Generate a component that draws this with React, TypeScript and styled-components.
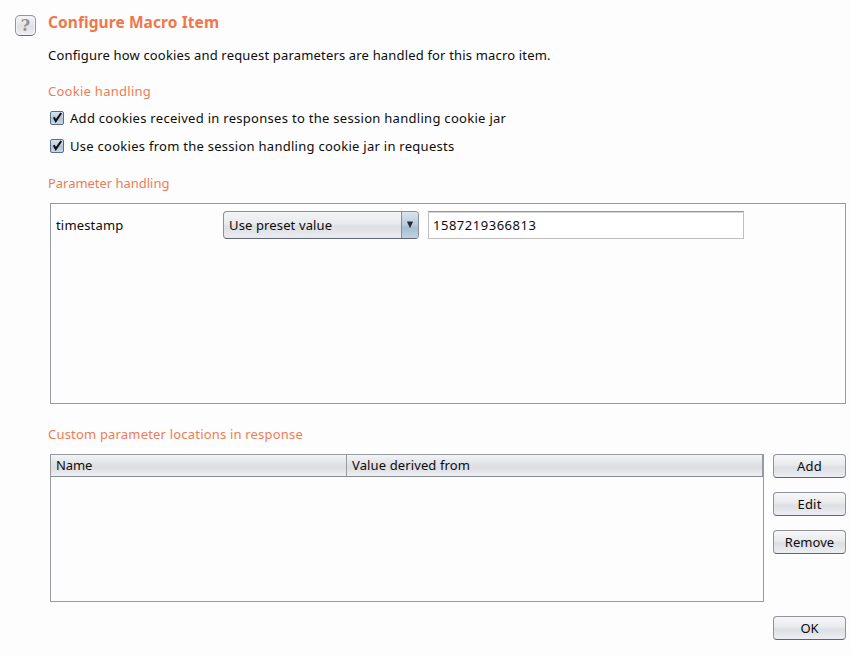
import React from "react";
import styled, { createGlobalStyle } from "styled-components";

const GlobalStyle = createGlobalStyle`
  * { box-sizing: border-box; }
  body {
    margin: 0;
    background: #fdfdfd;
    color: #0c0c0c;
    font-family: "Noto Sans", "Open Sans", sans-serif;
    font-size: 13px;
    line-height: 20px;
    overflow: hidden;
  }
  button, input { font: inherit; color: inherit; margin: 0; }
`;

const Dialog = styled.main`
  display: grid;
  grid-template-columns: 33px 1fr;
  width: 851px;
  height: 655px;
  padding: 12px 5px 0 15px;
`;

const Content = styled.div`
  display: flex;
  flex-direction: column;
`;

const Tracked = styled.span<{ $spacing: number }>`
  letter-spacing: ${(p) => p.$spacing}px;
  white-space: nowrap;
`;

const Title = styled.h1`
  margin: 0;
  height: 20px;
  font-size: 15.5px;
  line-height: 20px;
  font-weight: 700;
  color: #f0774a;
`;

const Description = styled.p`
  margin: 13px 0 0;
`;

const Heading = styled.h2<{ $top: number }>`
  margin: ${(p) => p.$top}px 0 0;
  font-size: 13px;
  line-height: 20px;
  font-weight: 400;
  color: #ee7c55;
`;

const CheckRow = styled.label<{ $top: number }>`
  display: flex;
  align-items: center;
  gap: 6px;
  height: 20px;
  margin: ${(p) => p.$top}px 0 0 2px;
`;

const CheckIcon = styled.svg`
  display: block;
  width: 14px;
  height: 16px;
  overflow: visible;
`;

const HelpButton = styled.button`
  display: flex;
  justify-content: center;
  width: 21px;
  height: 21px;
  margin-top: 3px;
  padding: 0;
  border: 1px solid #92959b;
  border-bottom-color: #666b73;
  border-radius: 5px;
  background: linear-gradient(#f5f6f8, #dfe1e5 55%, #eceef2);
  box-shadow: inset 0 0 0 1px #f3f4f6;
  color: #909296;
  font-family: "DejaVu Serif", serif;
  font-size: 16px;
  line-height: 19px;
  font-weight: 700;
`;

const ParameterPanel = styled.section`
  display: flex;
  align-items: flex-start;
  width: 796px;
  height: 201px;
  margin: 10px 0 0 2px;
  padding: 7px 0 0 5px;
  border: 1px solid #979a9f;
`;

const ParameterName = styled.div`
  width: 167px;
  padding-top: 4px;
`;

const Select = styled.button`
  display: flex;
  width: 196px;
  height: 28px;
  padding: 0;
  border: 1px solid #8b8f96;
  border-bottom-color: #5d6570;
  border-radius: 4px;
  background: linear-gradient(#f3f4f6, #e9eaed 45%, #dcdee2 55%, #eaecf1);
  text-align: left;
  overflow: hidden;
`;

const SelectValue = styled.span`
  flex: 1;
  padding: 3px 0 0 5px;
`;

const SelectArrow = styled.span`
  display: flex;
  align-items: center;
  justify-content: center;
  width: 17px;
  height: 26px;
  border-left: 1px solid #7d91a5;
  background: linear-gradient(#d9e4ee, #b9cbdb 50%, #a7bed1 60%, #bfd3e4);
`;

const ValueInput = styled.input`
  width: 316px;
  height: 28px;
  margin-left: 9px;
  padding: 0 4px;
  border: 1px solid #bfbfc0;
  border-top-color: #949494;
  border-radius: 0;
  background: #fff;
  box-shadow: inset 0 1px 0 #d5d5d5;
  outline: none;
  letter-spacing: 0.52px;
`;

const LocationArea = styled.section`
  display: flex;
  gap: 9px;
  margin: 10px 0 0 2px;
`;

const Table = styled.div`
  width: 714px;
  height: 148px;
  border: 1px solid #979a9f;
`;

const TableHead = styled.div`
  display: grid;
  grid-template-columns: 296px 1fr;
  height: 22px;
  border-bottom: 1px solid #868c94;
  background: linear-gradient(#f3f4f6, #e3e4e8 38%, #dcdde1 60%, #eef0f5);
`;

const HeadCell = styled.div`
  padding-left: 5px;
  border-right: 1px solid #969ba2;
`;

const Actions = styled.div`
  display: flex;
  flex-direction: column;
  gap: 14px;
  width: 73px;
`;

const ActionButton = styled.button`
  display: flex;
  justify-content: center;
  width: 73px;
  height: 24px;
  padding: 1px 0 0;
  border: 1px solid #90939a;
  border-bottom-color: #5f656e;
  border-radius: 4px;
  background: linear-gradient(#f7f7f9, #e9eaed 45%, #dcdee2 55%, #eceef3);
`;

const Footer = styled.footer`
  display: flex;
  justify-content: flex-end;
  margin-top: 14px;
`;

function CheckedBox() {
  return (
    <CheckIcon viewBox="0 0 14 16">
      <defs>
        <linearGradient id="box" x1="0" y1="0" x2="0" y2="1">
          <stop offset="0" stopColor="#dce7f1" />
          <stop offset="0.55" stopColor="#afc4d6" />
          <stop offset="1" stopColor="#c9dae8" />
        </linearGradient>
      </defs>
      <rect x="0.5" y="1.5" width="13" height="13" rx="1.5" fill="url(#box)" stroke="#596f86" />
      <path d="M3.8 7.2 L5.8 11 L11.2 3" fill="none" stroke="#090d12" strokeWidth="2" />
    </CheckIcon>
  );
}

export default function App() {
  return (
    <>
      <GlobalStyle />
      <Dialog>
        <HelpButton aria-label="Help">?</HelpButton>
        <Content>
          <Title><Tracked $spacing={0.08}>Configure Macro Item</Tracked></Title>
          <Description>
            <Tracked $spacing={0.17}>Configure how cookies and request parameters are handled for this macro item.</Tracked>
          </Description>
          <Heading $top={16}><Tracked $spacing={0.27}>Cookie handling</Tracked></Heading>
          <CheckRow $top={7}>
            <CheckedBox />
            <Tracked $spacing={0.29}>Add cookies received in responses to the session handling cookie jar</Tracked>
          </CheckRow>
          <CheckRow $top={8}>
            <CheckedBox />
            <Tracked $spacing={0.27}>Use cookies from the session handling cookie jar in requests</Tracked>
          </CheckRow>
          <Heading $top={17}><Tracked $spacing={-0.03}>Parameter handling</Tracked></Heading>
          <ParameterPanel>
            <ParameterName><Tracked $spacing={0.17}>timestamp</Tracked></ParameterName>
            <Select>
              <SelectValue><Tracked $spacing={0.13}>Use preset value</Tracked></SelectValue>
              <SelectArrow>
                <svg width="8" height="8" viewBox="0 0 8 8"><path d="M0.9 0.5H7.1L4 7.3Z" fill="#252a30" /></svg>
              </SelectArrow>
            </Select>
            <ValueInput defaultValue="1587219366813" />
          </ParameterPanel>
          <Heading $top={20}><Tracked $spacing={0.19}>Custom parameter locations in response</Tracked></Heading>
          <LocationArea>
            <Table>
              <TableHead>
                <HeadCell><Tracked $spacing={-0.1}>Name</Tracked></HeadCell>
                <HeadCell><Tracked $spacing={0.12}>Value derived from</Tracked></HeadCell>
              </TableHead>
            </Table>
            <Actions>
              <ActionButton><Tracked $spacing={0.3}>Add</Tracked></ActionButton>
              <ActionButton><Tracked $spacing={0.2}>Edit</Tracked></ActionButton>
              <ActionButton><Tracked $spacing={0.05}>Remove</Tracked></ActionButton>
            </Actions>
          </LocationArea>
          <Footer>
            <ActionButton><Tracked $spacing={0}>OK</Tracked></ActionButton>
          </Footer>
        </Content>
      </Dialog>
    </>
  );
}
